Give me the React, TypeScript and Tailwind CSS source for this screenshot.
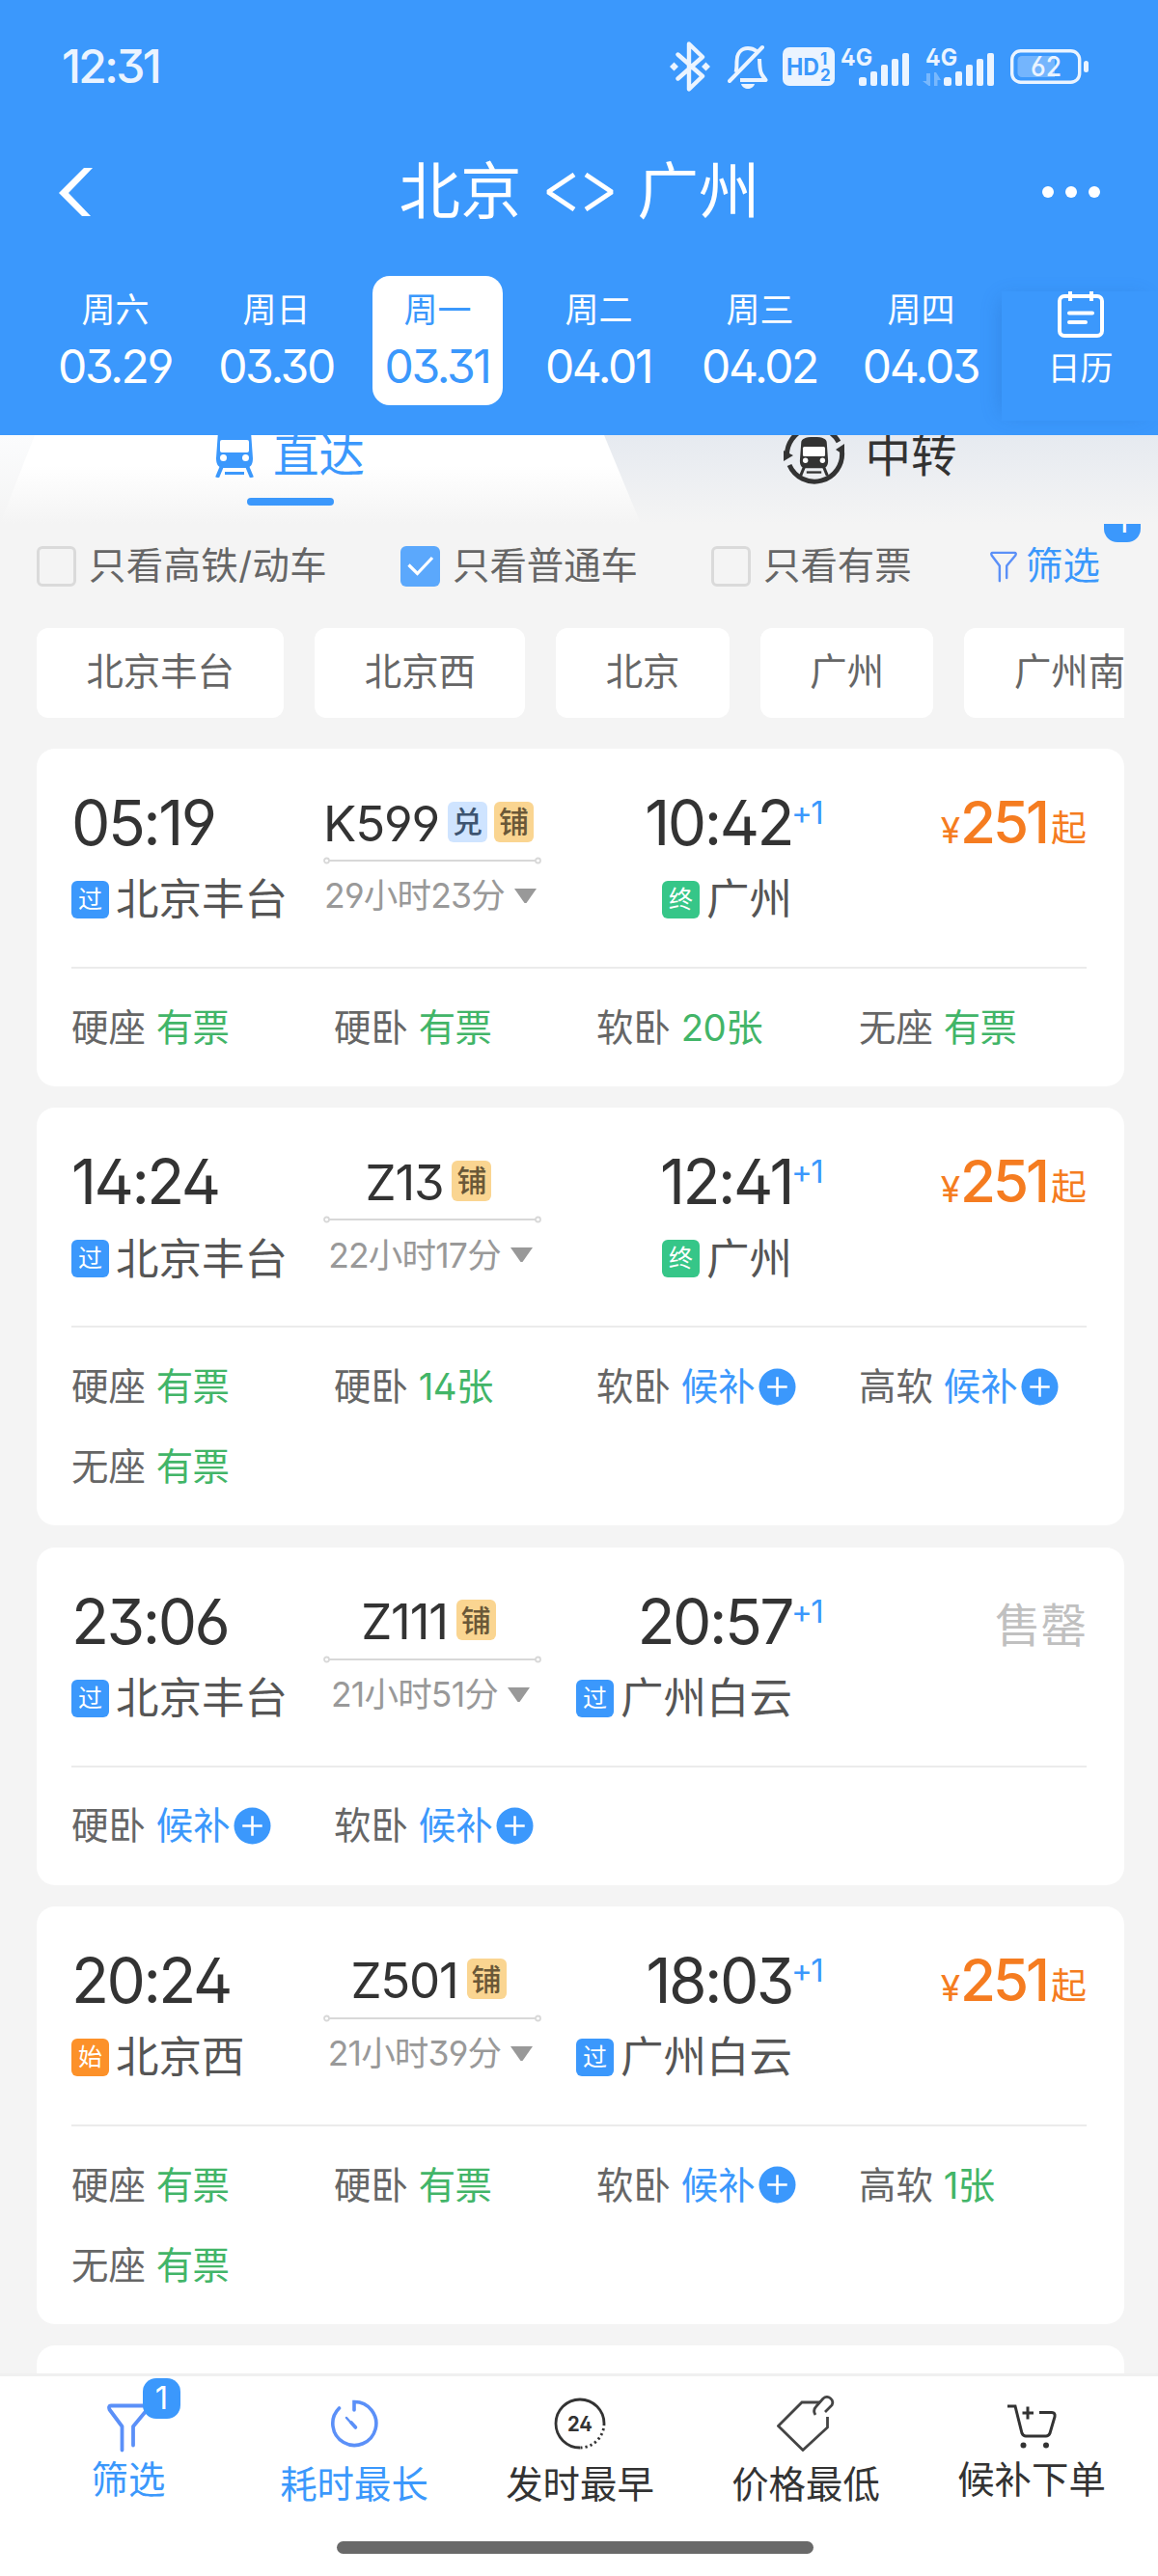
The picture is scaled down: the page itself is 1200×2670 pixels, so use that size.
import React, { FC, ReactNode } from "react";

type StopType = "pass" | "start" | "end";

interface Seat {
  name: string;
  value: string;
}

interface Train {
  code: string;
  tags: string[];
  depart: string;
  from: string;
  fromType: StopType;
  duration: string;
  arrive: string;
  to: string;
  toType: StopType;
  price?: number;
  seats: Seat[];
}

const days = [
  { week: "周六", date: "03.29" },
  { week: "周日", date: "03.30" },
  { week: "周一", date: "03.31" },
  { week: "周二", date: "04.01" },
  { week: "周三", date: "04.02" },
  { week: "周四", date: "04.03" },
];

const stations = ["北京丰台", "北京西", "北京", "广州", "广州南"];

const trains: Train[] = [
  {
    code: "K599",
    tags: ["兑", "铺"],
    depart: "05:19",
    from: "北京丰台",
    fromType: "pass",
    duration: "29小时23分",
    arrive: "10:42",
    to: "广州",
    toType: "end",
    price: 251,
    seats: [
      { name: "硬座", value: "有票" },
      { name: "硬卧", value: "有票" },
      { name: "软卧", value: "20张" },
      { name: "无座", value: "有票" },
    ],
  },
  {
    code: "Z13",
    tags: ["铺"],
    depart: "14:24",
    from: "北京丰台",
    fromType: "pass",
    duration: "22小时17分",
    arrive: "12:41",
    to: "广州",
    toType: "end",
    price: 251,
    seats: [
      { name: "硬座", value: "有票" },
      { name: "硬卧", value: "14张" },
      { name: "软卧", value: "候补" },
      { name: "高软", value: "候补" },
      { name: "无座", value: "有票" },
    ],
  },
  {
    code: "Z111",
    tags: ["铺"],
    depart: "23:06",
    from: "北京丰台",
    fromType: "pass",
    duration: "21小时51分",
    arrive: "20:57",
    to: "广州白云",
    toType: "pass",
    seats: [
      { name: "硬卧", value: "候补" },
      { name: "软卧", value: "候补" },
    ],
  },
  {
    code: "Z501",
    tags: ["铺"],
    depart: "20:24",
    from: "北京西",
    fromType: "start",
    duration: "21小时39分",
    arrive: "18:03",
    to: "广州白云",
    toType: "pass",
    price: 251,
    seats: [
      { name: "硬座", value: "有票" },
      { name: "硬卧", value: "有票" },
      { name: "软卧", value: "候补" },
      { name: "高软", value: "1张" },
      { name: "无座", value: "有票" },
    ],
  },
];

const stopStyles: Record<StopType, { label: string; color: string }> = {
  pass: { label: "过", color: "bg-[#3b98fc]" },
  start: { label: "始", color: "bg-[#fc9129]" },
  end: { label: "终", color: "bg-[#36c688]" },
};

const Signal: FC<{ roaming?: boolean }> = ({ roaming }) => (
  <svg className="overflow-visible" width="74" height="44" viewBox="0 0 74 44" fill="currentColor">
    <text x="0" y="21" fontSize="24" fontWeight="700" textLength="33" lengthAdjust="spacingAndGlyphs">
      4G
    </text>
    <rect x="19" y="33" width="8" height="9" rx="2.5" />
    <rect x="31" y="27" width="7" height="15" rx="2" />
    <rect x="42" y="20" width="7" height="22" rx="2" />
    <rect x="53" y="14" width="7" height="28" rx="2" />
    <rect x="64" y="8" width="7" height="34" rx="2" />
    {roaming && (
      <path d="M-3 37h4V29H5v13H3.500zM9 42V28h2l5 8h-3.500v6z" opacity=".35" />
    )}
  </svg>
);

const StatusBar = () => (
  <div className="flex h-[137px] items-center justify-between pl-16 pr-[71px] text-[#ebf4ff]">
    <span className="text-[48px] leading-none font-medium tracking-[-2.6px]">12:31</span>
    <div className="flex items-center">
      <svg width="42" height="52" viewBox="0 -2 42 52" fill="none" stroke="currentColor" strokeWidth="4.400" strokeLinejoin="round" strokeLinecap="round">
        <path d="M8.500 11.500L34 34 20 47.500V.5L34 14 8.500 36.500" />
        <path d="M4.500 19.500l4.500 4.500-4.500 4.500L0 24zM37.500 19.500L42 24l-4.500 4.500L33 24z" fill="currentColor" stroke="none" />
      </svg>
      <svg className="ml-[18px]" width="42" height="48" viewBox="0 0 42 48" fill="none" stroke="currentColor" strokeWidth="4">
        <path d="M8.500 30c1-3 1-6 1-11C9.500 9 15 5 21 5c4 0 7 1.500 9 3" />
        <path d="M33 16c.5 9 0 13 3 17l3.500 5H13" strokeLinejoin="round" />
        <path d="M2 39L36 4" strokeLinecap="round" />
        <path d="M14 42h14c-1 3.500-4 5-7 5s-6-1.500-7-5z" fill="currentColor" stroke="none" />
      </svg>
      <svg className="ml-[15px]" width="54" height="40" viewBox="0 0 54 40">
        <rect width="54" height="40" rx="7" fill="currentColor" />
        <g fill="#3b98fc" fontWeight="700">
          <text x="4" y="29" fontSize="24" textLength="34" lengthAdjust="spacingAndGlyphs">HD</text>
          <text x="39" y="18" fontSize="17">1</text>
          <text x="39" y="35" fontSize="17">2</text>
        </g>
      </svg>
      <div className="ml-1.5 flex">
        <Signal />
        <div className="ml-3.5">
          <Signal roaming />
        </div>
      </div>
      <svg className="ml-3.5" width="82" height="36" viewBox="0 0 82 36">
        <rect x="1.700" y="1.700" width="70" height="32.600" rx="9" fill="none" stroke="currentColor" strokeWidth="3.400" />
        <path d="M12 7h34v22H12a4.500 4.500 0 0 1-4.500-4.500v-13A4.500 4.500 0 0 1 12 7z" fill="currentColor" opacity=".32" />
        <rect x="76" y="12" width="5" height="12" rx="2.500" fill="currentColor" />
        <text x="21" y="28" fontSize="28" fontWeight="500" fill="currentColor" textLength="32" lengthAdjust="spacingAndGlyphs">
          62
        </text>
      </svg>
    </div>
  </div>
);

const TitleBar = () => (
  <div className="flex h-[124px] items-center justify-between px-[60px] text-white">
    <svg className="ml-px" width="60" height="50" viewBox="0 0 60 50" fill="currentColor">
      <path d="M26 0h9L10 26l23 24h-9L0 26z" />
    </svg>
    <h1 className="flex items-center text-[63.500px] leading-none">
      <span className="-mt-0.5">北京</span>
      <svg className="mx-[24px]" width="72" height="40" viewBox="0 0 72 40" fill="none" stroke="currentColor" strokeWidth="5">
        <path d="M30 2L3 20l27 18M42 2l27 18-27 18" strokeLinejoin="bevel" />
      </svg>
      <span className="-mt-0.5">广州</span>
    </h1>
    <svg width="60" height="14" viewBox="0 0 60 14" fill="currentColor">
      <circle cx="6" cy="7" r="6" />
      <circle cx="30" cy="7" r="6" />
      <circle cx="54" cy="7" r="6" />
    </svg>
  </div>
);

const DateBar = () => (
  <div className="flex h-[190px] overflow-hidden pl-9 text-white">
    <div className="flex w-[1002px] pt-[25px]">
      {days.map((day) => (
        <div key={day.date} className="flex w-[167px] shrink-0 justify-center">
          <div
            className={`flex h-[134px] w-[135px] flex-col items-center rounded-[18px] pt-4 ${
              day.date === "03.31" ? "bg-white text-[#3b98fc]" : ""
            }`}
          >
            <span className="text-[35px] leading-[38px]">{day.week}</span>
            <span className="mt-[14px] mr-px text-[48px] leading-[52px] tracking-[-2.400px]">{day.date}</span>
          </div>
        </div>
      ))}
    </div>
    <div className="mt-[41px] flex h-[134px] flex-1 flex-col items-center bg-[#3b98fc] pl-[1px] shadow-[-7px_0_20px_-8px_rgba(30,90,170,0.32)]">
      <svg width="48" height="48" viewBox="0 0 48 48" fill="none" stroke="currentColor" strokeWidth="4">
        <rect x="2" y="5" width="44" height="41" rx="5" />
        <path d="M13 0v10M35 0v10" />
        <path d="M12 22.500h24M12 32h17" strokeLinecap="round" />
      </svg>
      <span className="mt-[14px] text-[34px] leading-[36px]">日历</span>
    </div>
  </div>
);

const TrainIcon: FC<{ className?: string; width: number; height: number }> = ({ className, width, height }) => (
  <svg className={className} width={width} height={height} viewBox="0 0 40 52">
    <path d="M7 2C9 .5 14 0 20 0s11 .5 13 2c3 1 4 3 4.200 5L39 32c0 6-2 9-6 10H7c-4-1-6-4-6-10L2.800 7C3 5 4 3 7 2z" fill="currentColor" />
    <path d="M7 40L2 52M33 40l5 12" stroke="currentColor" strokeWidth="4" />
    <rect x="5" y="13" width="30" height="13" rx="2" fill="#fff" />
    <circle cx="8.500" cy="31.500" r="3.500" fill="#fff" />
    <circle cx="31.500" cy="31.500" r="3.500" fill="#fff" />
    <rect x="10" y="46" width="20" height="3" fill="currentColor" />
  </svg>
);

const Tabs = () => (
  <div className="relative h-[92px] overflow-hidden bg-gradient-to-b from-[#e6eaf0] to-[#f4f4f4]">
    <svg className="absolute inset-0" width="1200" height="92" viewBox="0 0 1200 92">
      <defs>
        <linearGradient id="tab" x1="0" y1="0" x2="0" y2="1">
          <stop offset="0.35" stopColor="#fff" />
          <stop offset="1" stopColor="#f4f4f4" />
        </linearGradient>
        <linearGradient id="edge" x1="0" y1="0" x2="0" y2="1">
          <stop offset="0" stopColor="#fbfcfd" />
          <stop offset="1" stopColor="#f4f4f4" />
        </linearGradient>
      </defs>
      <path d="M0 0h200v92H0z" fill="url(#edge)" />
      <path d="M36 0H626L664 92H0z" fill="url(#tab)" />
    </svg>
    <div className="relative flex text-[47.500px]">
      <div className="flex w-[601px] flex-col items-center text-[#3b98fc]">
        <div className="flex h-[42px] items-center">
          <TrainIcon className="mr-[20px] mt-[-7px]" width={40} height={52} />
          <span className="leading-none">直达</span>
        </div>
        <div className="mt-[23px] h-2 w-[90px] rounded bg-[#3b98fc]" />
      </div>
      <div className="flex h-[42px] flex-1 items-center justify-center pl-0.5 text-[#333]">
        <span className="relative mr-[21px] flex h-[64px] w-[64px] shrink-0 items-center justify-center">
          <svg className="absolute inset-0" width="64" height="64" viewBox="0 0 64 64" fill="none" stroke="currentColor" strokeWidth="5">
            <path d="M3.500 33A28.500 28.500 0 0 1 57 18" />
            <path d="M60.500 28A28.500 28.500 0 0 1 6 42" />
            <path d="M0 38V27l10 5zM63 20v12l-9-6z" fill="currentColor" stroke="none" />
          </svg>
          <TrainIcon className="mt-0.5" width={31} height={40} />
        </span>
        <span className="leading-none">中转</span>
      </div>
    </div>
  </div>
);

const Checkbox: FC<{ checked?: boolean; className: string; children: ReactNode }> = ({ checked, className, children }) => (
  <label className={`flex items-center ${className}`}>
    <span
      className={`mr-[13px] flex h-[42px] w-[41px] items-center justify-center rounded-md ${
        checked ? "bg-[#5ba8fc]" : "border-[3px] border-[#dadada]"
      }`}
    >
      {checked && (
        <svg width="28" height="22" viewBox="0 0 28 22" fill="none" stroke="#fff" strokeWidth="3.200">
          <path d="M1.500 9.500l9 9L26 2" />
        </svg>
      )}
    </span>
    <span className="-mt-0.5">{children}</span>
  </label>
);

const FunnelIcon: FC<{ width: number; height: number }> = ({ width, height }) => (
  <svg width={width} height={height} viewBox="0 0 44 50" fill="none" stroke="#5b90f8" strokeWidth="3.800" strokeLinecap="round" strokeLinejoin="round">
    <path d="M15.500 48V23.500L2.500 6C1.500 3.500 2 2 4 2h36c2 0 2.500 1.500 1.500 4L27 23.500V43" />
  </svg>
);

const Filters = () => (
  <div className="flex h-[88px] items-center overflow-hidden pl-[38px] text-[38.4px] leading-none text-[#666]">
    <Checkbox className="w-[377px] tracking-[0.4px]">只看高铁/动车</Checkbox>
    <Checkbox className="w-[322px]" checked>
      只看普通车
    </Checkbox>
    <Checkbox className="w-[289px]">只看有票</Checkbox>
    <div className="relative flex items-center text-[#3b98fc]">
      <FunnelIcon width={28} height={35} />
      <span className="-mt-0.5 ml-[9px]">筛选</span>
      <span className="absolute -top-[49px] left-[118px] flex h-[42px] w-[38px] items-center justify-center rounded-[14px] bg-[#3b98fc] text-[33px] text-white">
        1
      </span>
    </div>
  </div>
);

const StationChips = () => (
  <div className="mx-[38px] mt-5 flex w-[1127px] gap-8 overflow-hidden">
    {stations.map((name) => (
      <button
        key={name}
        className="h-[93px] shrink-0 rounded-xl bg-white px-[51.400px] pb-0.5 text-[38.4px] leading-none text-[#666]"
      >
        {name}
      </button>
    ))}
  </div>
);

const Stop: FC<{ type: StopType; name: string }> = ({ type, name }) => (
  <div className="flex h-[46px] items-center">
    <span
      className={`mr-[7px] flex h-[39px] w-[39px] shrink-0 items-center justify-center rounded-md text-[25px] leading-none text-white ${stopStyles[type].color}`}
    >
      {stopStyles[type].label}
    </span>
    <span className="text-[44.500px] leading-none whitespace-nowrap text-[#555]">{name}</span>
  </div>
);

const SeatItem: FC<{ seat: Seat }> = ({ seat }) => {
  const waiting = seat.value === "候补";
  return (
    <div className="flex h-[83px] w-[272px] items-center text-[38.4px] leading-none">
      <span className="mr-[11px] text-[#666]">{seat.name}</span>
      <span className={waiting ? "text-[#3b98fc]" : "tracking-[-0.600px] text-[#42b568]"}>{seat.value}</span>
      {waiting && (
        <svg className="ml-[3px]" width="39" height="39" viewBox="0 0 40 40">
          <circle cx="20" cy="20" r="19.500" fill="#3b98fc" />
          <path d="M20 9.500v21M9.500 20h21" stroke="#fff" strokeWidth="2.600" />
        </svg>
      )}
    </div>
  );
};

const TrainCard: FC<{ train: Train }> = ({ train }) => (
  <div className="rounded-[19px] bg-white pr-[39px] pb-[19.500px] pl-9">
    <div className="flex h-[228px] border-b-2 border-[#ebebeb] pt-[50px]">
      <div className="w-[261px]">
        <div className="h-[54px] text-[64px] leading-[54px] tracking-[-2.500px] text-[#333]">{train.depart}</div>
        <div className="mt-[29.500px]">
          <Stop type={train.fromType} name={train.from} />
        </div>
      </div>
      <div className="flex w-[226px] flex-col items-center">
        <div className="mr-[8px] -mt-px flex h-[56px] items-center">
          <span className="mr-[9px] text-[51px] leading-none tracking-[-1.200px] text-[#333]">{train.code}</span>
          <span className="-mt-[3px] flex gap-[7px]">
            {train.tags.map((tag) => (
              <span
                key={tag}
                className={`flex h-[42px] w-[41px] items-center justify-center rounded-md text-[31px] leading-none font-medium ${
                  tag === "兑" ? "bg-[#cfe4ff] text-[#3d5470]" : "bg-[#fad591] text-[#6a5838]"
                }`}
              >
                {tag}
              </span>
            ))}
          </span>
        </div>
        <svg className="mt-[7px]" width="226" height="8" viewBox="0 0 226 8" fill="none" stroke="#d8d8d8" strokeWidth="1.800">
          <path d="M6 4h214" />
          <circle cx="3.500" cy="4" r="2.500" />
          <circle cx="222.500" cy="4" r="2.500" />
        </svg>
        <div className="mt-[10px] mr-[4px] flex h-[46px] items-center">
          <span className="text-[35.500px] leading-none tracking-[-0.8px] whitespace-nowrap text-[#999]">{train.duration}</span>
          <svg className="ml-2.5" width="23" height="16" viewBox="0 0 23 16" fill="#999">
            <path d="M0 0h23L12.500 15h-2z" />
          </svg>
        </div>
      </div>
      <div className="flex w-[260px] flex-col items-end">
        <div className="relative h-[54px] text-[64px] leading-[54px] tracking-[-2.500px] text-[#333]">
          {train.arrive}
          <sup className="absolute top-[1px] left-full -ml-px text-[33px] leading-[30px] tracking-[-1.500px] text-[#3b98fc]">+1</sup>
        </div>
        <div className="mt-[29.500px]">
          <Stop type={train.toType} name={train.to} />
        </div>
      </div>
      <div className="flex flex-1 justify-end leading-[53px]">
        {train.price ? (
          <div className="flex items-baseline text-[#f57c20]">
            <span className="text-[37px]">¥</span>
            <span className="text-[60px] font-medium tracking-[-3px]">{train.price}</span>
            <span className="relative -top-[2px] ml-1 text-[37px]">起</span>
          </div>
        ) : (
          <span className="text-[47.500px] leading-[61px] text-[#c0c0c0]">售罄</span>
        )}
      </div>
    </div>
    <div className="-mr-[39px] flex flex-wrap pt-[19.500px]">
      {train.seats.map((seat) => (
        <SeatItem key={seat.name} seat={seat} />
      ))}
    </div>
  </div>
);

const NavItem: FC<{ icon: ReactNode; label: string; active?: boolean; raised?: boolean }> = ({ icon, label, active, raised }) => (
  <button
    className={`flex w-[234px] flex-col items-center text-[38.4px] leading-none ${
      active ? "text-[#3b98fc]" : "text-[#333]"
    }`}
  >
    <span className="flex h-[98px] items-center justify-center">{icon}</span>
    <span className={raised ? "-mt-[10px]" : "-mt-[5px]"}>{label}</span>
  </button>
);

const BottomNav = () => (
  <nav className="absolute inset-x-0 bottom-0 flex h-[210px] flex-col items-center border-t-[3px] border-[#f0f0f0] bg-white">
    <div className="ml-[2px] flex w-[1170px]">
      <NavItem
        active
        raised
        label="筛选"
        icon={
          <span className="relative mt-[8px]">
            <FunnelIcon width={44} height={57} />
            <span className="absolute -top-[23px] left-[37px] flex h-[42px] w-[39px] items-center justify-center rounded-[14px] bg-[#3b98fc] text-[33px] text-white">
              1
            </span>
          </span>
        }
      />
      <NavItem
        active
        label="耗时最长"
        icon={
          <svg width="50" height="50" viewBox="0 0 50 50" fill="none" stroke="#5b90f8" strokeWidth="3.600" strokeLinecap="round">
            <path d="M25 11V2.500A22.500 22.500 0 1 1 9.500 9" />
            <path d="M17 19l9 10" strokeWidth="2.500" />
            <path d="M22 24l4.500 5" />
          </svg>
        }
      />
      <NavItem
        label="发时最早"
        icon={
          <svg width="54" height="54" viewBox="0 0 54 54" fill="none" stroke="#333" strokeWidth="2.800">
            <path d="M27 52A25 25 0 1 1 52 27" />
            <path d="M52 27A25 25 0 0 1 27 52" strokeDasharray="2.200 3" />
            <text x="14" y="34.500" fontSize="21" fontWeight="700" fill="#333" stroke="none" textLength="26" lengthAdjust="spacingAndGlyphs">
              24
            </text>
          </svg>
        }
      />
      <NavItem
        label="价格最低"
        icon={
          <svg width="60" height="58" viewBox="0 0 60 58" fill="none" stroke="#444" strokeWidth="2.800">
            <path d="M45 7H26L1.500 31.500 27 56.500 52.500 33V22" />
            <path d="M40 20c-2-3-2-6 1-9l7-8c5-4 12 1 9 7l-7 7" />
          </svg>
        }
      />
      <NavItem
        raised
        label="候补下单"
        icon={
          <svg className="mt-1.5 ml-0.5" width="52" height="48" viewBox="0 0 52 48" fill="none" stroke="#333" strokeWidth="3">
            <path d="M0 3h8l7 28c1 2 2 3 4 3h21c2 0 3-1 4-3l5-17c.5-3-.5-4.500-3-4.500H33" />
            <path d="M21 3.500v13M15.500 10H27" />
            <circle cx="16.500" cy="43.500" r="3" fill="#333" stroke="none" />
            <circle cx="40" cy="43.500" r="3" fill="#333" stroke="none" />
          </svg>
        }
      />
    </div>
    <div className="absolute bottom-[23px] left-[349px] h-[13px] w-[494px] rounded-full bg-[#696969]" />
  </nav>
);

export default function App() {
  return (
    <div className="relative h-[2670px] w-[1200px] overflow-hidden bg-[#f4f4f4] font-['Inter','Noto_Sans_CJK_SC',sans-serif] [font-feature-settings:'cv09','ss01']">
      <header className="bg-[#3b98fc]">
        <StatusBar />
        <TitleBar />
        <DateBar />
      </header>
      <Tabs />
      <Filters />
      <StationChips />
      <main className="mx-[38px] mt-8 flex w-[1127px] flex-col gap-[22.300px]">
        {trains.map((train) => (
          <TrainCard key={train.code} train={train} />
        ))}
        <div className="h-[350px] rounded-[19px] bg-white" />
      </main>
      <BottomNav />
    </div>
  );
}
